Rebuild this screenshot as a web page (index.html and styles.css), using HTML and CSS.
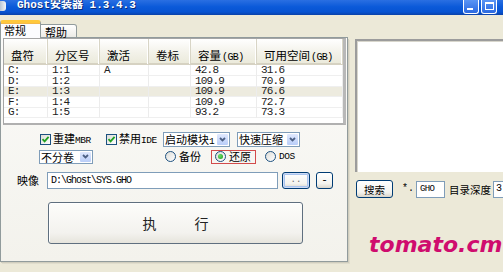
FILE: index.html
```html
<!DOCTYPE html>
<html lang="zh-CN">
<head>
<meta charset="utf-8">
<title>Ghost安装器 1.3.4.3</title>
<link rel="stylesheet" href="styles.css">
</head>
<body>
<header class="titlebar">
  <span class="app-icon"></span>
  <span class="title">Ghost安装器 1.3.4.3</span>
  <span class="caption">
    <span class="cap-btn min"><i></i></span>
    <span class="cap-btn max"><i></i></span>
  </span>
</header>

<div class="client">
  <section class="left">
    <nav class="tabs">
      <span class="tab active">常规</span>
      <span class="tab">帮助</span>
      <span class="tab-fill"></span>
    </nav>

    <div class="panel">
      <div class="list">
        <div class="lv-head">
          <span>盘符</span><span>分区号</span><span>激活</span><span>卷标</span>
          <span>容量<em>(GB)</em></span><span>可用空间<em>(GB)</em></span><span></span>
        </div>
        <div class="lv-row"><span>C:</span><span>1:1</span><span>A</span><span></span><span>42.8</span><span>31.6</span><span></span></div>
        <div class="lv-row"><span>D:</span><span>1:2</span><span></span><span></span><span>109.9</span><span>70.9</span><span></span></div>
        <div class="lv-row sel"><span>E:</span><span>1:3</span><span></span><span></span><span>109.9</span><span>76.6</span><span></span></div>
        <div class="lv-row"><span>F:</span><span>1:4</span><span></span><span></span><span>109.9</span><span>72.7</span><span></span></div>
        <div class="lv-row"><span>G:</span><span>1:5</span><span></span><span></span><span>93.2</span><span>73.3</span><span></span></div>
      </div>

      <div class="row row1">
        <label class="check w66"><span class="cb"><svg viewBox="0 0 9 9"><path d="M1.5 4.2 L3.6 6.4 L7.6 1.8" /></svg></span><span class="cap">重建<span class="asc">MBR</span></span></label>
        <label class="check w57"><span class="cb"><svg viewBox="0 0 9 9"><path d="M1.5 4.2 L3.6 6.4 L7.6 1.8" /></svg></span><span class="cap">禁用<span class="asc">IDE</span></span></label>
        <span class="combo w67"><span class="combo-text">启动模块<span class="asc">1</span></span><span class="combo-btn"><svg viewBox="0 0 9 9"><path d="M2 3 L4.5 5.5 L7 3" /></svg></span></span>
        <span class="combo w63 ml7"><span class="combo-text">快速压缩</span><span class="combo-btn"><svg viewBox="0 0 9 9"><path d="M2 3 L4.5 5.5 L7 3" /></svg></span></span>
      </div>

      <div class="row row2">
        <span class="combo small w54"><span class="combo-text">不分卷</span><span class="combo-btn"><svg viewBox="0 0 9 9"><path d="M2 3 L4.5 5.5 L7 3" /></svg></span></span>
        <label class="radio r-backup"><span class="rb"></span><span class="cap">备份</span></label>
        <label class="radio r-restore"><span class="rb on"></span><span class="cap">还原</span></label>
        <label class="radio r-dos"><span class="rb"></span><span class="cap asc">DOS</span></label>
      </div>

      <div class="row row3">
        <span class="lbl">映像</span>
        <span class="field path">D:\Ghost\SYS.GHO</span>
        <span class="btn browse">..</span>
        <span class="btn minus">-</span>
      </div>

      <div class="exec"><span>执</span><span>行</span></div>
    </div>
  </section>

  <aside class="right">
    <div class="log"></div>
    <div class="search">
      <span class="btn find">搜索</span>
      <span class="star">*.</span>
      <span class="field ext">GHO</span>
      <span class="depth-lbl">目录深度</span>
      <span class="field depth">3</span>
    </div>
  </aside>
</div>

<div class="watermark">tomato.cm</div>
</body>
</html>
```

FILE: styles.css
```css
* { box-sizing: border-box; }

html, body { margin: 0; padding: 0; }

body {
  width: 503px;
  height: 272px;
  overflow: hidden;
  position: relative;
  background: #ECE9D8;
  color: #000;
  font-family: "Noto Sans CJK SC", "Noto Sans", sans-serif;
  font-size: 11px;
  line-height: 13px;
}

/* ---------- title bar ---------- */
.titlebar {
  height: 15px;
  display: flex;
  align-items: flex-start;
  background: linear-gradient(#2a6fe2, #0b5ad9 45%, #0753d2 80%, #0a41a8);
  color: #fff;
}
.app-icon {
  width: 6px;
  height: 10px;
  margin-top: 1px;
  background: linear-gradient(90deg, #b9c5d4, #f4f6f8);
  border-radius: 0 3px 3px 0;
}
.title {
  margin-left: 11px;
  font: bold 11px/11px "Liberation Mono", "Noto Sans CJK SC", monospace;
  text-shadow: 1px 1px 0 #0b2c78;
  white-space: pre;
}
.caption {
  margin-left: auto;
  margin-right: 6px;
  display: flex;
  gap: 2px;
}
.cap-btn {
  width: 16px;
  height: 14px;
  display: flex;
  border: 1px solid #fff;
  border-top: none;
  border-radius: 0 0 3px 3px;
  background: linear-gradient(#5a95f5, #2b69e0);
}
.cap-btn.min i {
  width: 6px;
  height: 2px;
  margin: 8px 0 0 3px;
  background: #fff;
}
.cap-btn.max i {
  width: 9px;
  height: 8px;
  margin: 2px auto 0;
  border: 1px solid #fff;
  border-top-width: 2px;
}

/* ---------- client area ---------- */
.client {
  display: flex;
  height: 257px;
}
.left {
  width: 348px;
  flex: none;
}

/* tabs */
.tabs {
  height: 23px;
  display: flex;
  align-items: flex-end;
}
.tab {
  font-size: 11px;
  line-height: 12px;
}
.tab.active {
  width: 41px;
  height: 18px;
  padding: 1px 0 0 3px;
  background: #FCFCFE;
  border-left: 1px solid #919B9C;
  border-right: 1px solid #919B9C;
  border-top: 3px solid #FFC83C;
  border-radius: 3px 3px 0 0;
  box-shadow: inset 0 1px 0 #F5B94A;
}
.tab:not(.active) {
  width: 36px;
  height: 14px;
  padding: 1px 0 0 4px;
  background: linear-gradient(#FFFFFF, #ECEBE6);
  border: 1px solid #919B9C;
  border-left: none;
  border-radius: 0 3px 0 0;
}
.tab-fill {
  flex: 1;
  border-bottom: 1px solid #919B9C;
}

/* tab page */
.panel {
  height: 224px;
  padding-left: 2px;
  background: linear-gradient(#FBFBF9, #F3F2EC);
  border: 1px solid #919B9C;
  border-top: none;
  box-shadow: 1px 1px 0 #D0CDBE, 2px 2px 0 #E0DDCD;
}

/* list view */
.list {
  width: 343px;
  height: 87px;
  background: #fff;
  border: 1px solid #A5A5A5;
  border-right: 3px solid #B8B8B8;
  border-bottom: 2px solid #B0B0B0;
  overflow: hidden;
}
.lv-head,
.lv-row {
  display: grid;
  grid-template-columns: 44px 52px 49px 42px 66px 86px 1fr;
}
.lv-head {
  height: 26px;
  background: linear-gradient(#FFFFFF, #F3F2EA 55%, #EBEADB);
  border-bottom: 2px solid #D6D2C2;
  font-size: 11.5px;
  line-height: 12px;
}
.lv-head span {
  padding: 10px 0 0 7px;
  border-right: 1px solid #D8D5C6;
  box-shadow: inset -1px 0 0 #fff;
  white-space: nowrap;
}
.lv-head em {
  font: normal 10px/12px "Liberation Mono", monospace;
  letter-spacing: -0.6px;
  margin-left: 1px;
}
.lv-row {
  height: 10.5px;
  font: 11px/10px "Liberation Mono", monospace;
  letter-spacing: -0.8px;
  color: #222;
}
.lv-row span {
  padding-left: 4px;
  border-right: 1px solid #ECECEC;
  border-bottom: 1px solid #EFEFEF;
  white-space: nowrap;
}
.lv-row.sel { background: #EDEBDF; }

/* control rows */
.row {
  display: flex;
  align-items: center;
}
.row1 { margin-top: 7px; height: 15px; padding-left: 37px; }
.row2 { margin-top: 2px; height: 15px; padding-left: 36px; }
.row3 { margin-top: 8px; height: 17px; padding-left: 14px; }

.cap {
  line-height: 13px;
  white-space: nowrap;
}
.asc {
  font-family: "Liberation Mono", monospace;
  font-size: 9.5px;
  letter-spacing: -0.4px;
}

.check {
  display: flex;
  align-items: center;
  gap: 2px;
  white-space: nowrap;
}
.w66 { width: 66px; }
.w57 { width: 57px; }
.w67 { width: 67px; }
.w63 { width: 63px; }
.w54 { width: 54px; }
.ml7 { margin-left: 7px; }

.cb {
  width: 11px;
  height: 11px;
  flex: none;
  border: 1px solid #1C5180;
  background: linear-gradient(135deg, #DCDCD7, #FFFFFF);
  display: flex;
}
.cb svg {
  width: 9px;
  height: 9px;
  fill: none;
  stroke: #21A121;
  stroke-width: 1.8;
}

/* combo boxes */
.combo {
  height: 15px;
  flex: none;
  display: flex;
  border: 1px solid #7F9DB9;
  background: #fff;
  white-space: nowrap;
}
.combo.small { height: 14px; }
.combo-text {
  flex: 1;
  min-width: 0;
  padding-left: 1px;
  line-height: 12px;
}
.combo-btn {
  width: 13px;
  flex: none;
  display: flex;
  align-items: center;
  justify-content: center;
  background: linear-gradient(#E0E9FE, #B9CDF8);
  border: 1px solid #fff;
  border-radius: 2px;
}
.combo-btn svg {
  width: 9px;
  height: 9px;
  fill: none;
  stroke: #4D6185;
  stroke-width: 1.8;
}

/* radio buttons */
.radio {
  display: flex;
  align-items: center;
  gap: 3px;
  white-space: nowrap;
  flex: none;
}
.rb {
  width: 11px;
  height: 11px;
  flex: none;
  border-radius: 50%;
  border: 1px solid #1C5180;
  background: linear-gradient(135deg, #DCDCD7, #FFFFFF);
  display: flex;
  align-items: center;
  justify-content: center;
}
.rb.on::before {
  content: "";
  width: 5px;
  height: 5px;
  border-radius: 50%;
  background: radial-gradient(circle at 35% 35%, #6CE06C, #1B9A1B);
}
.r-backup { margin-left: 72px; }
.r-restore {
  margin-left: 10px;
  width: 45px;
  height: 14px;
  padding-left: 3px;
  border: 1px solid #D24B4B;
}
.r-dos { margin-left: 9px; }

/* image path row */
.lbl { width: 22px; flex: none; }
.field {
  display: flex;
  flex: none;
  align-items: center;
  height: 17px;
  border: 1px solid #7F9DB9;
  background: #fff;
  font: 10px/12px "Liberation Mono", monospace;
  letter-spacing: -1px;
  white-space: nowrap;
  overflow: hidden;
}
.path {
  margin-left: 8px;
  width: 231px;
  padding-left: 3px;
}

.btn {
  display: flex;
  flex: none;
  align-items: center;
  justify-content: center;
  height: 17px;
  border: 1px solid #003C74;
  border-radius: 3px;
  background: linear-gradient(#FFFFFF, #F3F3EF 70%, #D9D5CB);
  white-space: nowrap;
}
.browse {
  margin-left: 4px;
  width: 28px;
  font: 9px/9px "Liberation Mono", monospace;
  color: #6a6a6a;
  box-shadow: inset 0 0 0 1px #CEDCF6, inset 0 0 0 2px #A9C3EE;
}
.minus {
  margin-left: 6px;
  width: 17px;
  font: 11px/11px "Liberation Mono", monospace;
}

/* execute button */
.exec {
  margin: 13px 0 0 45px;
  width: 255px;
  height: 42px;
  display: flex;
  align-items: center;
  justify-content: center;
  gap: 38px;
  border: 1px solid #5F6F7F;
  border-radius: 3px;
  background: linear-gradient(#FDFDFB, #F3F2EE 75%, #E6E4DC);
  box-shadow: inset 1px 1px 0 #fff;
  font-size: 14px;
  line-height: 16px;
  color: #222;
}

/* ---------- right column ---------- */
.right {
  flex: 1;
  padding: 24px 0 0 7px;
  min-width: 0;
}
.log {
  width: 160px;
  height: 133px;
  background: #fff;
  border-top: 2px solid #9C9C9C;
  border-left: 2px solid #9C9C9C;
  box-shadow: inset 1px 1px 0 #D8D6CC;
}
.search {
  margin-top: 8px;
  display: flex;
  align-items: center;
  height: 18px;
  white-space: nowrap;
}
.search > * { flex: none; }
.find {
  margin-left: 1px;
  width: 37px;
  height: 18px;
  font-size: 10.5px;
}
.star {
  margin-left: 9px;
  font: 10px/12px "Liberation Mono", monospace;
}
.ext {
  margin-left: 2px;
  width: 29px;
  padding-left: 3px;
  font-size: 9px;
  letter-spacing: -0.6px;
}
.depth-lbl {
  margin-left: 4px;
  font-size: 10.5px;
}
.depth {
  margin-left: 2px;
  width: 20px;
  padding-left: 2px;
}

/* ---------- watermark overlay ---------- */
.watermark {
  position: absolute;
  left: 369px;
  top: 234px;
  font: italic bold 22px/22px "DejaVu Sans", sans-serif;
  color: #CF0C6E;
}
```
